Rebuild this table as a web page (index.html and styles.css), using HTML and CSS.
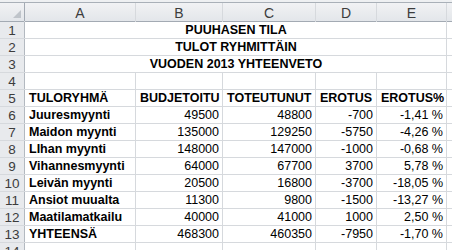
FILE: index.html
```html
<!DOCTYPE html>
<html lang="fi">
<head>
<meta charset="utf-8">
<title>Puuhasen tila</title>
<link rel="stylesheet" href="styles.css">
</head>
<body>
<div class="topbar"></div>
<div class="sheet">
  <div class="hd corner"><span class="tri"></span></div>
  <div class="hd col">A</div>
  <div class="hd col">B</div>
  <div class="hd col">C</div>
  <div class="hd col">D</div>
  <div class="hd col">E</div>
  <div class="hd col"></div>

  <div class="hd rn">1</div>
  <div class="c title">PUUHASEN TILA</div>
  <div class="c"></div>

  <div class="hd rn">2</div>
  <div class="c title">TULOT RYHMITTÄIN</div>
  <div class="c"></div>

  <div class="hd rn">3</div>
  <div class="c title">VUODEN 2013 YHTEENVETO</div>
  <div class="c"></div>

  <div class="hd rn">4</div>
  <div class="c"></div><div class="c"></div><div class="c"></div><div class="c"></div><div class="c"></div><div class="c"></div>

  <div class="hd rn">5</div>
  <div class="c b">TULORYHMÄ</div><div class="c b">BUDJETOITU</div><div class="c b">TOTEUTUNUT</div><div class="c b">EROTUS</div><div class="c b">EROTUS%</div><div class="c"></div>

  <div class="hd rn">6</div>
  <div class="c b">Juuresmyynti</div><div class="c n">49500</div><div class="c n">48800</div><div class="c n">-700</div><div class="c n">-1,41 %</div><div class="c"></div>

  <div class="hd rn">7</div>
  <div class="c b">Maidon myynti</div><div class="c n">135000</div><div class="c n">129250</div><div class="c n">-5750</div><div class="c n">-4,26 %</div><div class="c"></div>

  <div class="hd rn">8</div>
  <div class="c b">LIhan myynti</div><div class="c n">148000</div><div class="c n">147000</div><div class="c n">-1000</div><div class="c n">-0,68 %</div><div class="c"></div>

  <div class="hd rn">9</div>
  <div class="c b">Vihannesmyynti</div><div class="c n">64000</div><div class="c n">67700</div><div class="c n">3700</div><div class="c n">5,78 %</div><div class="c"></div>

  <div class="hd rn">10</div>
  <div class="c b">Leivän myynti</div><div class="c n">20500</div><div class="c n">16800</div><div class="c n">-3700</div><div class="c n">-18,05 %</div><div class="c"></div>

  <div class="hd rn">11</div>
  <div class="c b">Ansiot muualta</div><div class="c n">11300</div><div class="c n">9800</div><div class="c n">-1500</div><div class="c n">-13,27 %</div><div class="c"></div>

  <div class="hd rn">12</div>
  <div class="c b">Maatilamatkailu</div><div class="c n">40000</div><div class="c n">41000</div><div class="c n">1000</div><div class="c n">2,50 %</div><div class="c"></div>

  <div class="hd rn">13</div>
  <div class="c b">YHTEENSÄ</div><div class="c n">468300</div><div class="c n">460350</div><div class="c n">-7950</div><div class="c n">-1,70 %</div><div class="c"></div>

  <div class="hd rn">14</div>
  <div class="c"></div><div class="c"></div><div class="c"></div><div class="c"></div><div class="c"></div><div class="c"></div>
</div>
</body>
</html>
```
FILE: styles.css
```css
html, body {
  margin: 0;
  padding: 0;
  background: #ffffff;
  overflow: hidden;
}
body {
  width: 452px;
  height: 250px;
  font-family: "Liberation Sans", Arial, sans-serif;
}
.topbar {
  height: 2px;
  background: #eef0f2;
  border-bottom: 1px solid #a9b0b8;
}
.sheet {
  display: grid;
  grid-template-columns: 24px 110px 86px 92px 60px 69px 1fr;
  grid-template-rows: 18px repeat(14, 16px);
  gap: 1px;
  background: #d6d9dd;
}
.hd {
  background: linear-gradient(#f1f2f4, #e3e6ea);
  color: #3c3c3c;
  font-size: 14px;
  display: flex;
  align-items: center;
  justify-content: center;
}
.col {
  padding-top: 1px;
  box-shadow: 0 1px 0 #a3aab3;
}
.corner {
  position: relative;
  box-shadow: 0 1px 0 #a3aab3, 1px 0 0 #a3aab3;
}
.tri {
  position: absolute;
  right: 3px;
  bottom: 3px;
  width: 0;
  height: 0;
  border-left: 8px solid transparent;
  border-bottom: 8px solid #bfc4ca;
}
.rn {
  font-size: 13.5px;
  background: #e8eaed;
  box-shadow: 1px 0 0 #b3b9c0;
  padding-top: 1px;
}
.c {
  background: #ffffff;
  font-size: 12.5px;
  line-height: 16px;
  color: #000000;
  padding: 0 3px 0 4px;
  white-space: nowrap;
  overflow: visible;
}
.title {
  grid-column: 2 / 7;
  text-align: center;
  font-weight: bold;
}
.b {
  font-weight: bold;
}
.n {
  text-align: right;
  padding-right: 3px;
}
```
